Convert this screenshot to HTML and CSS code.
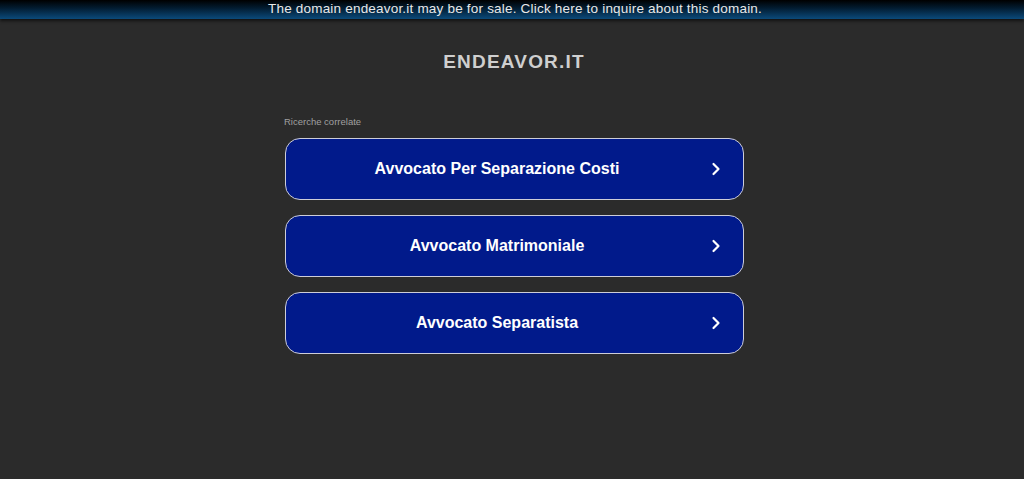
FILE: index.html
```html
<!DOCTYPE html>
<html lang="it">
	<head>
		<meta charset="UTF-8" />
		<meta name="viewport" content="width=device-width, initial-scale=1.0" />
		<title>endeavor.it</title>
		<link rel="stylesheet" href="styles.css">
	</head>
	<body>
		<div class="sale-banner">
			<a href="#">The domain endeavor.it may be for sale. Click here to inquire about this domain.</a>
		</div>
		<div class="container">
			<h1 class="domain">ENDEAVOR.IT</h1>
			<div class="related">
				<p class="related-title">Ricerche correlate</p>
				<a class="related-link" href="#">
					<span class="link-text">Avvocato Per Separazione Costi</span>
					<span class="link-arrow">
						<svg width="10" height="14" viewBox="0 0 10 14"><path d="M2.5 2 L7.5 7 L2.5 12" fill="none" stroke="#fff" stroke-width="2.2" stroke-linecap="round" stroke-linejoin="round"/></svg>
					</span>
				</a>
				<a class="related-link" href="#">
					<span class="link-text">Avvocato Matrimoniale</span>
					<span class="link-arrow">
						<svg width="10" height="14" viewBox="0 0 10 14"><path d="M2.5 2 L7.5 7 L2.5 12" fill="none" stroke="#fff" stroke-width="2.2" stroke-linecap="round" stroke-linejoin="round"/></svg>
					</span>
				</a>
				<a class="related-link" href="#">
					<span class="link-text">Avvocato Separatista</span>
					<span class="link-arrow">
						<svg width="10" height="14" viewBox="0 0 10 14"><path d="M2.5 2 L7.5 7 L2.5 12" fill="none" stroke="#fff" stroke-width="2.2" stroke-linecap="round" stroke-linejoin="round"/></svg>
					</span>
				</a>
			</div>
		</div>
	</body>
</html>
```

FILE: styles.css
```css
body {
	margin: 0;
	font-family: "Liberation Sans", Arial, sans-serif;
	background-color: #2b2b2b;
	height: 100vh;
}

.sale-banner {
	height: 19px;
	padding-left: 6px;
	background: linear-gradient(to bottom, #000000 0%, #021a2e 40%, #0b4a7a 100%);
	box-shadow: 0 2px 3px rgba(0, 0, 0, 0.6);
	text-align: center;
}
.sale-banner a {
	display: block;
	color: #e8e8e8;
	font-size: 13.5px;
	line-height: 17px;
	letter-spacing: 0.2px;
	text-decoration: none;
}

.container {
	width: 460px;
	margin: 0 auto;
	padding-left: 4px;
	padding-top: 32px;
}

.domain {
	margin: 0;
	text-align: center;
	color: #cfcfcf;
	font-size: 19px;
	font-weight: bold;
	line-height: 22px;
	letter-spacing: 1.2px;
}

.related {
	display: flex;
	flex-direction: column;
	gap: 15px;
	padding-top: 44px;
}

.related-title {
	margin: 0 0 -4px 0;
	color: #a0a0a0;
	font-size: 9.5px;
	line-height: 10px;
}

.related-link {
	display: flex;
	align-items: center;
	height: 62px;
	margin-left: 1px;
	padding: 0 9px 0 10px;
	box-sizing: border-box;
	width: 459px;
	background-color: #011a8b;
	border: 1px solid #cdcdd8;
	border-radius: 15px;
	color: #fff;
	text-decoration: none;
}

.link-text {
	flex: 1;
	text-align: center;
	font-size: 16px;
	font-weight: bold;
}

.link-arrow {
	width: 36px;
	display: flex;
	justify-content: center;
	align-items: center;
}
```
